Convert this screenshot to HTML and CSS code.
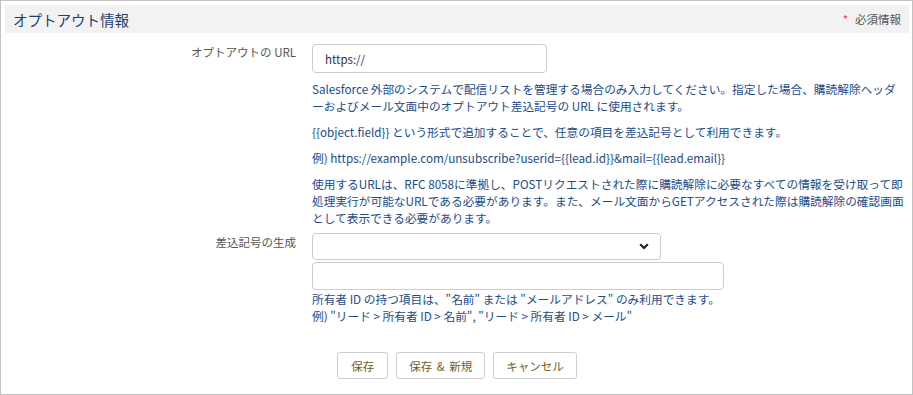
FILE: index.html
```html
<!DOCTYPE html>
<html lang="ja">
<head>
<meta charset="utf-8">
<title>オプトアウト情報</title>
<link rel="stylesheet" href="styles.css">
</head>
<body>
<div class="panel">
  <div class="panel-head">
    <h2 class="panel-title">オプトアウト情報</h2>
    <div class="required-note"><span class="req-star">*</span>必須情報</div>
  </div>

  <div class="form-row row-url">
    <label class="form-label">オプトアウトの URL</label>
    <div class="form-field">
      <input class="text-input url-input" type="text" value="https://">
      <div class="help-block">
        <p class="help first">Salesforce 外部のシステムで配信リストを管理する場合のみ入力してください。指定した場合、購読解除ヘッダ<br>ーおよびメール文面中のオプトアウト差込記号の URL に使用されます。</p>
        <p class="help">{{object.field}} という形式で追加することで、任意の項目を差込記号として利用できます。</p>
        <p class="help">例) https://example.com/unsubscribe?userid={{lead.id}}&amp;mail={{lead.email}}</p>
        <p class="help">使用するURLは、RFC 8058に準拠し、POSTリクエストされた際に購読解除に必要なすべての情報を受け取って即処理実行が可能なURLである必要があります。また、メール文面からGETアクセスされた際は購読解除の確認画面として表示できる必要があります。</p>
      </div>
    </div>
  </div>

  <div class="form-row row-merge">
    <label class="form-label">差込記号の生成</label>
    <div class="form-field">
      <div class="select-wrap">
        <select class="select-input"><option></option></select>
        <svg class="select-arrow" width="10" height="7" viewBox="0 0 10 7"><path d="M1.2 1.2 L5 5 L8.8 1.2" fill="none" stroke="#222" stroke-width="2.2"/></svg>
      </div>
      <input class="text-input merge-input" type="text" value="">
      <p class="help tight">所有者 ID の持つ項目は、"名前" または "メールアドレス" のみ利用できます。<br>例) "リード &gt; 所有者 ID &gt; 名前", "リード &gt; 所有者 ID &gt; メール"</p>
    </div>
  </div>

  <div class="button-row">
    <button class="btn" type="button">保存</button>
    <button class="btn" type="button">保存 &amp; 新規</button>
    <button class="btn" type="button">キャンセル</button>
  </div>
</div>
</body>
</html>
```

FILE: styles.css
```css
html, body {
  margin: 0;
  padding: 0;
  background: #ffffff;
}

body {
  font-family: "Noto Sans CJK JP", "Noto Sans", sans-serif;
  font-size: 11.5px;
  color: #444;
}

.panel {
  box-sizing: border-box;
  width: 913px;
  height: 395px;
  border: 1px solid #c2c2c2;
  padding: 4px 3px 4px 4px;
}

.panel-head {
  display: flex;
  align-items: center;
  justify-content: space-between;
  height: 28px;
  background: #f2f2f2;
  padding: 0 8px;
}

.panel-title {
  margin: 0;
  font-size: 14.5px;
  font-weight: normal;
  color: #1d3f70;
}

.required-note {
  font-size: 11.5px;
  color: #555;
}

.req-star {
  color: #e5485a;
  margin-right: 7px;
}

.form-row {
  display: grid;
  grid-template-columns: 291px 1fr;
  column-gap: 16px;
}

.row-url {
  margin-top: 11px;
}

.row-merge {
  margin-top: 7px;
}

.form-label {
  text-align: right;
  color: #555;
  line-height: 17px;
}

.row-merge .form-label {
  padding-top: 1px;
}

.form-field {
  padding-right: 0;
}

.help-block {
  width: 596px;
}

.text-input {
  box-sizing: border-box;
  display: block;
  font-family: inherit;
  font-size: 11.5px;
  color: #333;
  border: 1px solid #cccccc;
  border-radius: 4px;
  background: #fff;
  padding: 0 12px;
  margin: 0;
  outline: none;
}

.url-input {
  width: 235px;
  height: 29px;
}

.merge-input {
  width: 412px;
  height: 28px;
  margin-top: 2px;
}

.select-wrap {
  position: relative;
  width: 349px;
  height: 27px;
}

.select-input {
  box-sizing: border-box;
  width: 349px;
  height: 27px;
  appearance: none;
  -webkit-appearance: none;
  border: 1px solid #cccccc;
  border-radius: 4px;
  background: #fff;
  margin: 0;
  font-family: inherit;
  font-size: 11.5px;
}

.select-arrow {
  position: absolute;
  right: 12px;
  top: 10px;
}

.help {
  margin: 9px 0 0;
  line-height: 17px;
  font-size: 11.7px;
  color: #1c4b8a;
}

.help.first {
  margin-top: 7px;
}

.help.tight {
  margin-top: 0;
}

.button-row {
  display: flex;
  justify-content: center;
  gap: 8px;
  margin-top: 28px;
}

.btn {
  box-sizing: border-box;
  min-width: 51px;
  height: 27px;
  padding: 0 12px;
  font-family: inherit;
  font-size: 11.5px;
  color: #75601f;
  background: #fff;
  border: 1px solid #cfcfcf;
  border-radius: 3px;
  word-spacing: 2px;
}
```
